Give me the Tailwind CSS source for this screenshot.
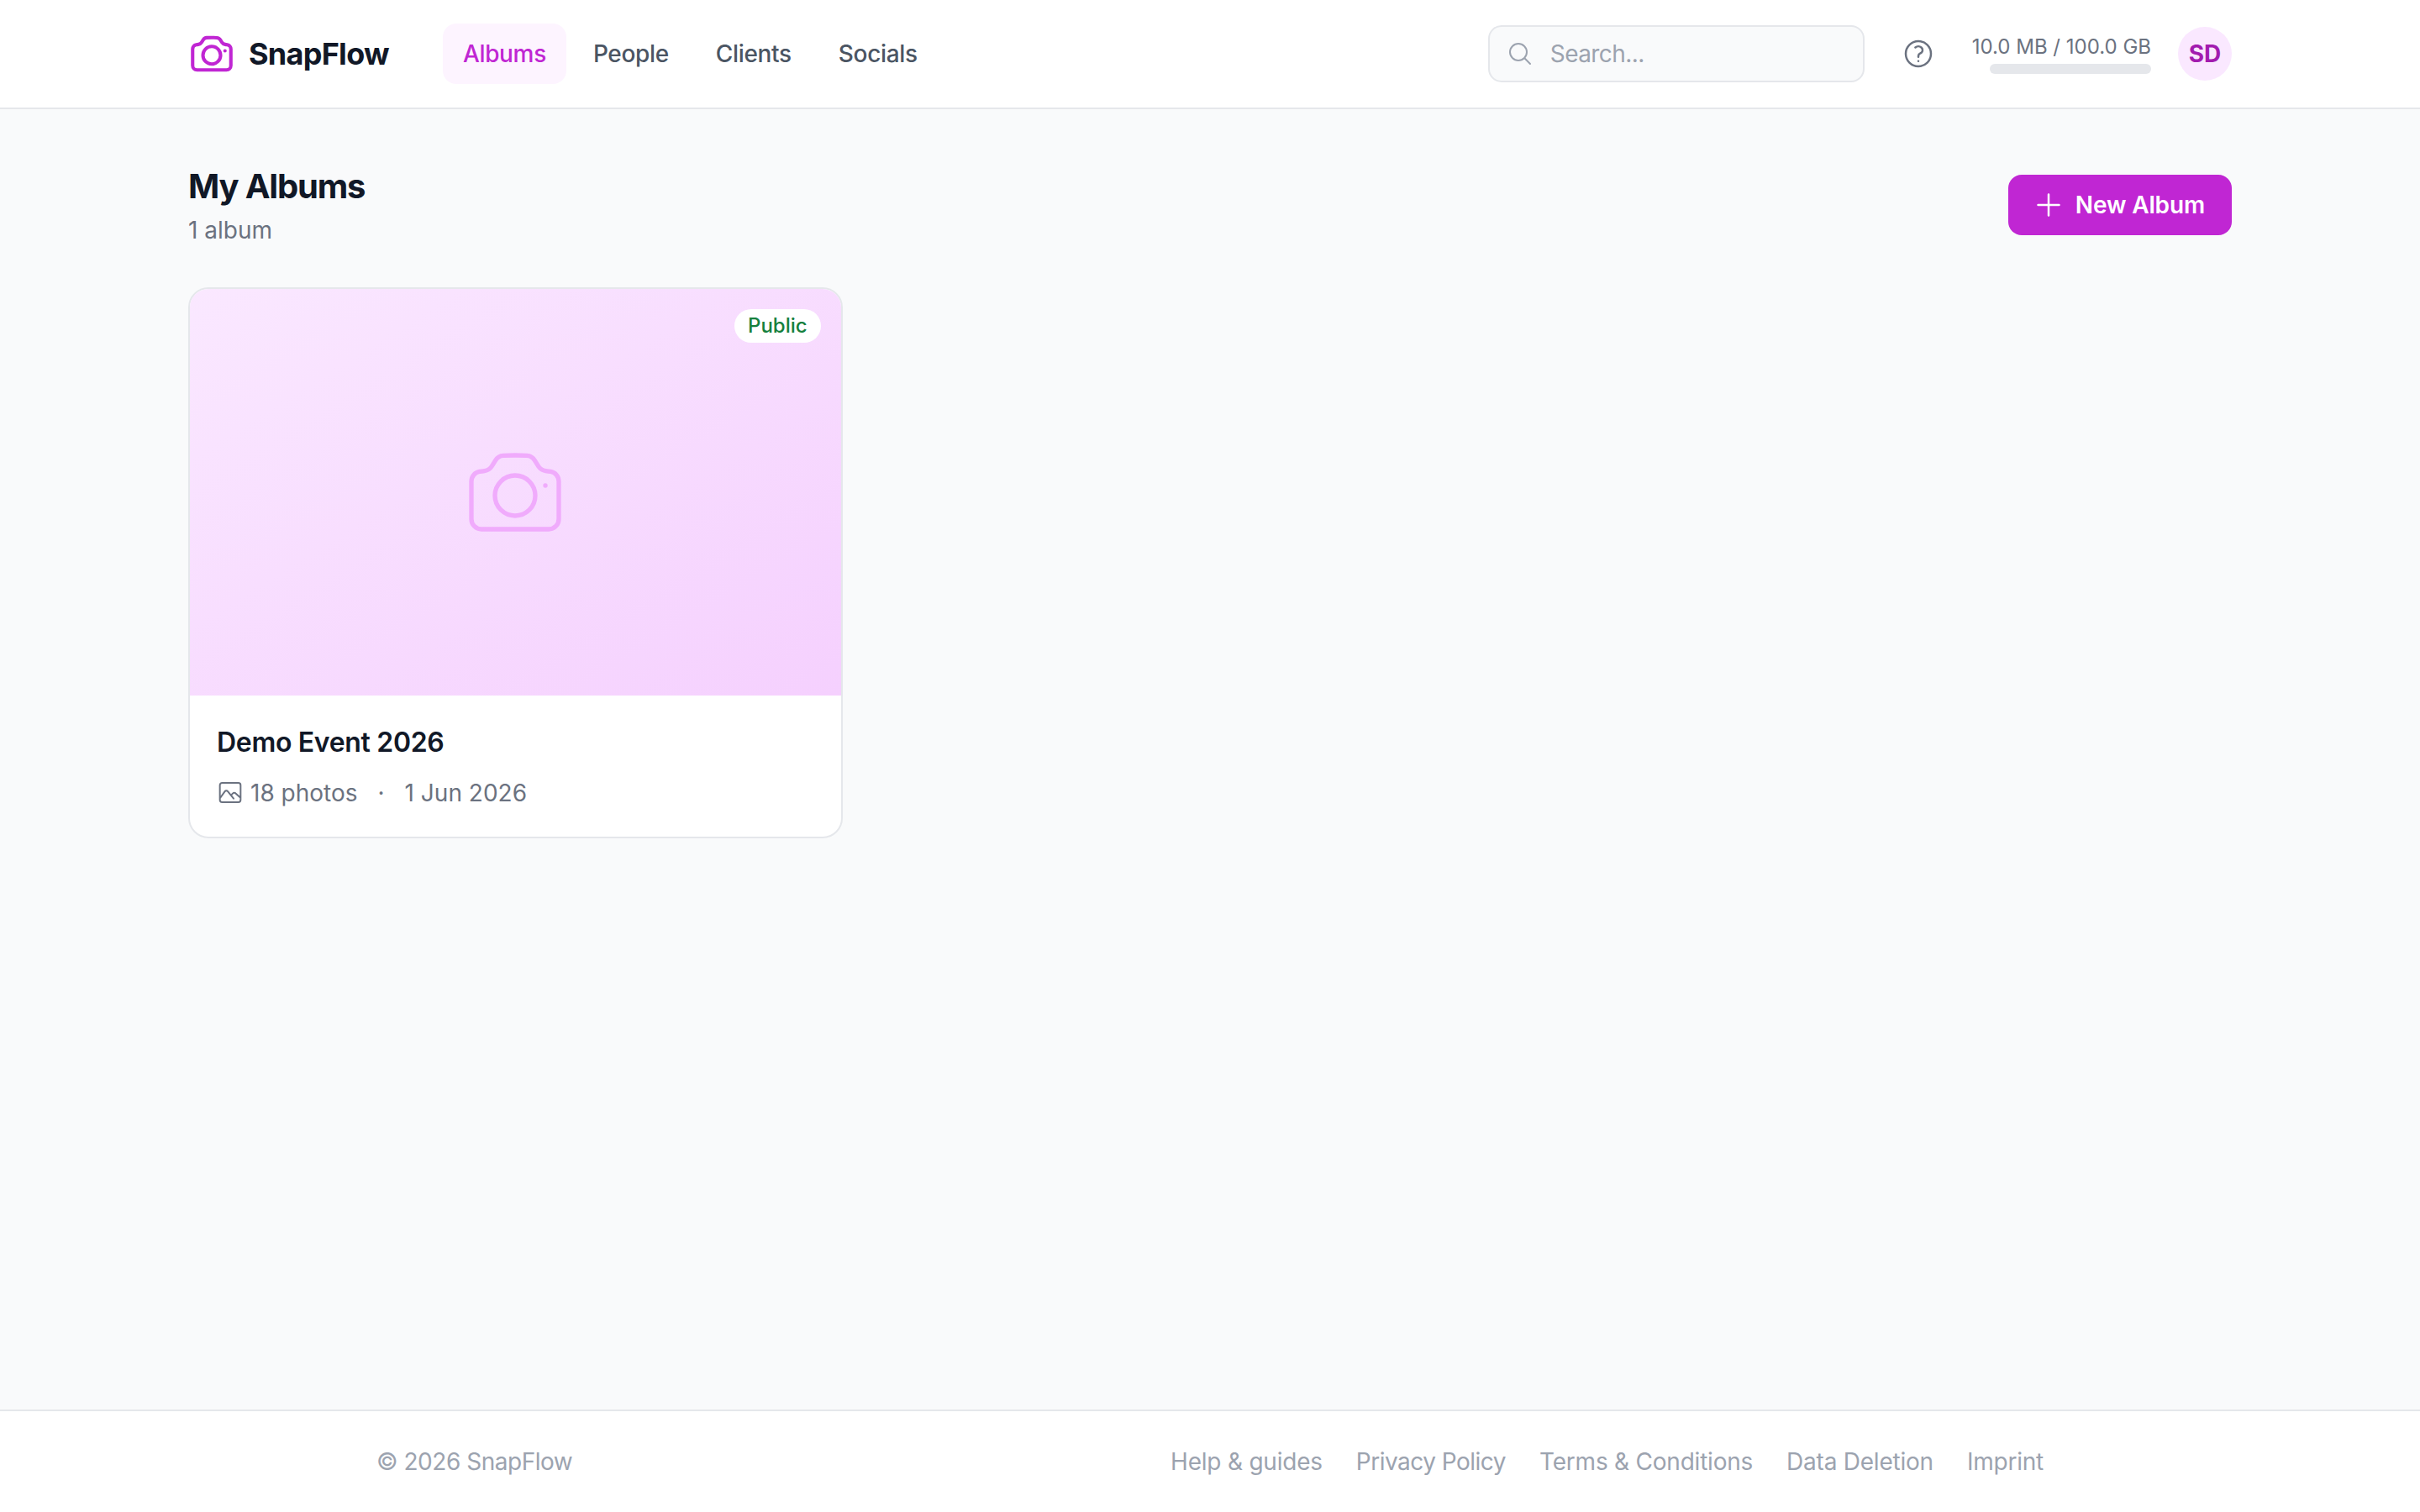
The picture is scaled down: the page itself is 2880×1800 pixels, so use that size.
<!DOCTYPE html>
<html lang="en" class="[font-size:32px]">
<head>
  <meta charset="UTF-8">
  <meta name="viewport" content="width=device-width, initial-scale=1.0">
  <title>SnapFlow</title>
  <script src="https://cdn.jsdelivr.net/npm/@tailwindcss/browser@4"></script>
</head>
<body class="min-h-screen flex flex-col bg-[#f9fafb] font-[Inter,sans-serif] text-[#111827]">
  <!-- top bar -->
  <header class="bg-white border-b-2 border-[#e5e7eb]">
    <div class="max-w-7xl mx-auto px-8 h-16 flex items-center justify-between">
      <div class="flex items-center">
        <a class="flex items-center gap-2">
          <svg class="w-7 h-7 text-[#c026d3]" fill="none" viewBox="0 0 24 24" stroke="currentColor" stroke-width="1.75" stroke-linecap="round" stroke-linejoin="round">
            <path d="M6.827 6.175A2.31 2.31 0 0 1 5.186 7.23c-.38.054-.757.112-1.134.175C2.999 7.58 2.25 8.507 2.25 9.574V18a2.25 2.25 0 0 0 2.25 2.25h15A2.25 2.25 0 0 0 21.75 18V9.574c0-1.067-.75-1.994-1.802-2.169a47.865 47.865 0 0 0-1.134-.175 2.31 2.31 0 0 1-1.64-1.055l-.822-1.316a2.192 2.192 0 0 0-1.736-1.039 48.774 48.774 0 0 0-5.232 0 2.192 2.192 0 0 0-1.736 1.039l-.821 1.316Z"/>
            <path d="M16.5 12.75a4.5 4.5 0 1 1-9 0 4.5 4.5 0 0 1 9 0ZM18.75 10.5h.008v.008h-.008V10.5Z"/>
          </svg>
          <span class="text-lg font-bold tracking-[-0.02em]">SnapFlow</span>
        </a>
        <nav class="ml-8 flex items-center gap-1 text-sm font-medium tracking-[-0.012em] text-[#4b5563]">
          <a class="px-3 py-2 rounded-lg bg-[#fdf4ff] text-[#c026d3]">Albums</a>
          <a class="px-3 py-2 rounded-lg">People</a>
          <a class="px-3 py-2 rounded-lg">Clients</a>
          <a class="px-3 py-2 rounded-lg">Socials</a>
        </nav>
      </div>
      <div class="flex items-center gap-4">
        <div class="relative">
          <svg class="absolute left-[22px] top-1/2 -translate-y-1/2 w-4 h-4 text-[#9ca3af]" fill="none" viewBox="0 0 24 24" stroke="currentColor" stroke-width="1.5" stroke-linecap="round" stroke-linejoin="round">
            <path d="m21 21-5.197-5.197m0 0A7.5 7.5 0 1 0 5.196 5.196a7.5 7.5 0 0 0 10.607 10.607Z"/>
          </svg>
          <input type="text" placeholder="Search..." class="block w-56 pl-9 pr-3 py-1.5 text-sm tracking-[-0.02em] bg-[#f9fafb] border-2 border-[#e5e7eb] rounded-lg placeholder:text-[#9ca3af]">
        </div>
        <button class="p-1.5 text-[#6b7280]">
          <svg class="w-5 h-5" fill="none" viewBox="0 0 24 24" stroke="currentColor" stroke-width="1.5" stroke-linecap="round" stroke-linejoin="round">
            <path d="M9.879 7.519c1.171-1.025 3.071-1.025 4.242 0 1.172 1.025 1.172 2.687 0 3.712-.203.179-.43.326-.67.442-.745.361-1.45.999-1.45 1.827v.75M21 12a9 9 0 1 1-18 0 9 9 0 0 1 18 0Zm-9 5.25h.008v.008H12v-.008Z"/>
          </svg>
        </button>
        <div class="flex flex-col items-end">
          <span class="text-xs text-[#6b7280]">10.0 MB / 100.0 GB</span>
          <div class="w-24 h-1.5 mt-0.5 rounded-full bg-[#e5e7eb]"></div>
        </div>
        <div class="w-8 h-8 rounded-full bg-[#fae8ff] text-[#a21caf] text-sm font-bold flex items-center justify-center">SD</div>
      </div>
    </div>
  </header>

  <main class="flex-1">
    <div class="max-w-7xl mx-auto px-8 py-8">
      <div class="flex items-center justify-between mb-6">
        <div>
          <h1 class="text-xl font-bold leading-7 tracking-[-0.03em]">My Albums</h1>
          <p class="mt-0.5 text-sm text-[#6b7280]">1 album</p>
        </div>
        <button class="flex items-center gap-1.5 pl-3.5 pr-4 py-2 rounded-lg bg-[#c026d3] text-white text-sm font-semibold tracking-[-0.005em]">
          <svg class="w-5 h-5" fill="none" viewBox="0 0 24 24" stroke="currentColor" stroke-width="1.5" stroke-linecap="round" stroke-linejoin="round">
            <path d="M12 4.5v15m7.5-7.5h-15"/>
          </svg>
          New Album
        </button>
      </div>

      <div class="grid grid-cols-3 gap-6">
        <div class="bg-white border-2 border-[#e5e7eb] rounded-xl overflow-hidden">
          <div class="relative aspect-[16/10] bg-linear-to-br from-[#fae8ff] to-[#f5d0fe] flex items-center justify-center">
            <svg class="w-16 h-16 text-[#f0abfc]" fill="none" viewBox="0 0 24 24" stroke="currentColor" stroke-width="1" stroke-linecap="round" stroke-linejoin="round">
              <path d="M6.827 6.175A2.31 2.31 0 0 1 5.186 7.23c-.38.054-.757.112-1.134.175C2.999 7.58 2.25 8.507 2.25 9.574V18a2.25 2.25 0 0 0 2.25 2.25h15A2.25 2.25 0 0 0 21.75 18V9.574c0-1.067-.75-1.994-1.802-2.169a47.865 47.865 0 0 0-1.134-.175 2.31 2.31 0 0 1-1.64-1.055l-.822-1.316a2.192 2.192 0 0 0-1.736-1.039 48.774 48.774 0 0 0-5.232 0 2.192 2.192 0 0 0-1.736 1.039l-.821 1.316Z"/>
              <path d="M16.5 12.75a4.5 4.5 0 1 1-9 0 4.5 4.5 0 0 1 9 0ZM18.75 10.5h.008v.008h-.008V10.5Z"/>
            </svg>
            <span class="absolute top-3 right-3 px-2 py-0.5 rounded-full bg-white text-xs font-medium text-[#15803d]">Public</span>
          </div>
          <div class="p-4">
            <h2 class="text-base font-semibold tracking-[-0.01em]">Demo Event 2026</h2>
            <div class="mt-2 flex items-center gap-3 text-sm text-[#6b7280]">
              <span class="flex items-center gap-1">
                <svg class="w-4 h-4" fill="none" viewBox="0 0 24 24" stroke="currentColor" stroke-width="1.5" stroke-linecap="round" stroke-linejoin="round">
                  <path d="M3 16.5 7.2 10.6a1.6 1.6 0 0 1 2.6 0L15 17M12.8 14l1.6-1.7a1.6 1.6 0 0 1 2.4 0l4.2 3.9M4.75 20.25h14.5a2 2 0 0 0 2-2V5a2 2 0 0 0-2-2H4.75a2 2 0 0 0-2 2v13.25a2 2 0 0 0 2 2Z"/>
                </svg>
                18 photos
              </span>
              <span>·</span>
              <span>1 Jun 2026</span>
            </div>
          </div>
        </div>
      </div>
    </div>
  </main>

  <footer class="bg-white border-t-2 border-[#e5e7eb]">
    <div class="max-w-5xl mx-auto px-4 py-5 flex items-center justify-between text-sm text-[#9ca3af]">
      <span class="tracking-[-0.017em]">© 2026 SnapFlow</span>
      <div class="flex items-center gap-5 tracking-[-0.008em]">
        <a>Help &amp; guides</a>
        <a class="tracking-[-0.018em]">Privacy Policy</a>
        <a>Terms &amp; Conditions</a>
        <a>Data Deletion</a>
        <a>Imprint</a>
      </div>
    </div>
  </footer>
</body>
</html>
